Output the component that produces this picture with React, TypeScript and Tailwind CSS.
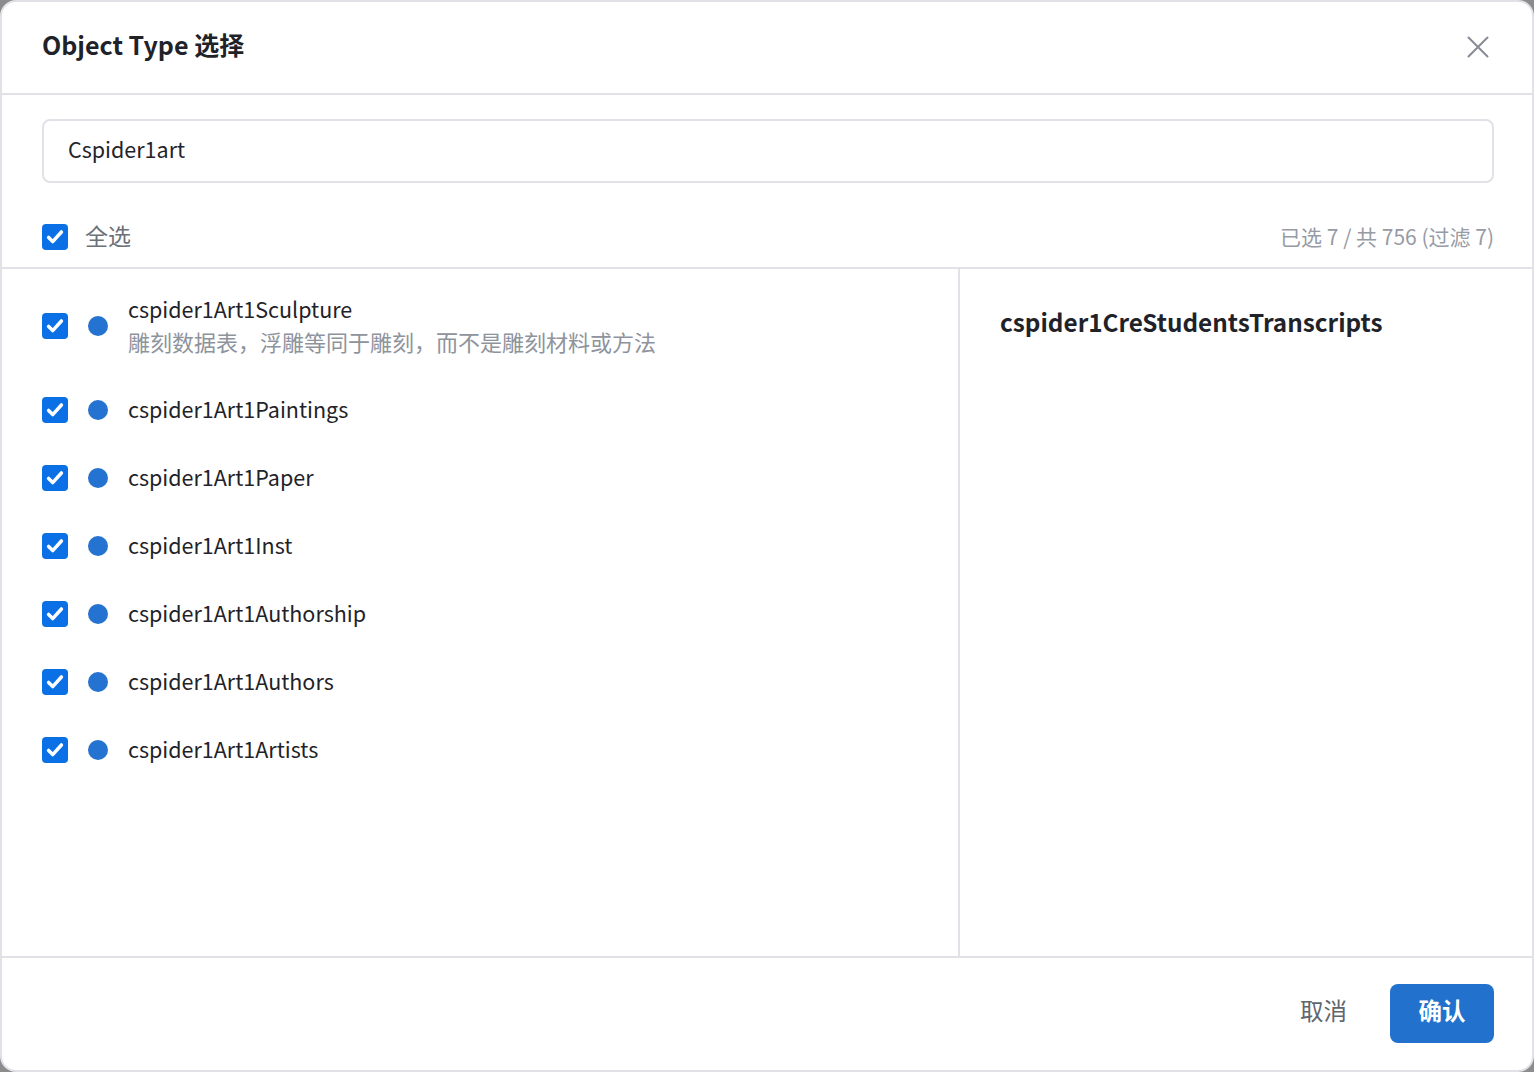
interface ObjectTypeItem {
  name: string
  description?: string
}

const items: ObjectTypeItem[] = [
  { name: 'cspider1Art1Sculpture', description: '雕刻数据表，浮雕等同于雕刻，而不是雕刻材料或方法' },
  { name: 'cspider1Art1Paintings' },
  { name: 'cspider1Art1Paper' },
  { name: 'cspider1Art1Inst' },
  { name: 'cspider1Art1Authorship' },
  { name: 'cspider1Art1Authors' },
  { name: 'cspider1Art1Artists' },
]

function CheckBox() {
  return (
    <span className="w-[26px] h-[26px] rounded-[4px] bg-[#0b6fe6] flex items-center justify-center flex-shrink-0">
      <svg viewBox="0 0 24 24" className="w-[22px] h-[22px]" fill="none" stroke="white" strokeWidth="3.8" strokeLinecap="round" strokeLinejoin="round">
        <path d="M5 12.5l4.5 4.5L19 6.5" />
      </svg>
    </span>
  )
}

export default function App() {
  return (
    <div className="bg-[#8c8c8c] min-h-[1072px] font-['Noto_Sans_CJK_SC','Noto_Sans',sans-serif]">
      <div className="h-[1072px] w-full bg-white rounded-[16px] border-2 border-[#e1e2e7] flex flex-col overflow-hidden">
        {/* En-tête */}
        <div className="h-[93px] flex-shrink-0 flex items-center justify-between pl-[40px] pr-[43px] border-b-2 border-[#e1e2e7]">
          <h1 className="text-[25px] font-semibold text-[#1f2329] leading-8 mb-[8px]">Object Type 选择</h1>
          <button className="text-[#868b96] mb-[2px]" aria-label="关闭">
            <svg viewBox="0 0 22 22" className="w-[22px] h-[22px]" fill="none" stroke="currentColor" strokeWidth="2" strokeLinecap="round">
              <path d="M1.5 1.5l19 19M20.5 1.5l-19 19" />
            </svg>
          </button>
        </div>

        {/* Recherche */}
        <div className="flex-shrink-0 pl-[40px] pr-[38px] pt-6 border-b-2 border-[#e1e2e7]">
          <div className="h-16 rounded-[8px] border-2 border-[#e1e2e7] flex items-center px-[24px]">
            <span className="text-[21.5px] text-[#1f2329] leading-8 mb-[4px]">Cspider1art</span>
          </div>
          <div className="h-[84px] flex items-center justify-between pt-[24px]">
            <div className="flex items-center gap-[17px]">
              <CheckBox />
              <span className="text-[23px] text-[#6b7079] leading-8 mb-[4px]">全选</span>
            </div>
            <span className="text-[21px] text-[#969ba5] leading-8 mb-[2px]">已选 7 / 共 756 (过滤 7)</span>
          </div>
        </div>

        {/* Corps */}
        <div className="flex-1 flex min-h-0 border-b-2 border-[#e1e2e7]">
          <div className="w-[958px] flex-shrink-0 border-r-2 border-[#e1e2e7] pt-[7px] pl-[40px]">
            {items.map(item => (
              <div key={item.name} className="flex items-center py-[17px]">
                <CheckBox />
                <span className="w-[20px] h-[20px] rounded-full bg-[#2573d0] ml-[20px] mr-[20px] flex-shrink-0" />
                <div className="mb-[2px]">
                  <p className="text-[21.5px] text-[#1f2329] leading-8">{item.name}</p>
                  {item.description && (
                    <p className="text-[22px] text-[#8e939c] leading-8">{item.description}</p>
                  )}
                </div>
              </div>
            ))}
          </div>
          <div className="flex-1 pl-[40px] pt-[37px]">
            <p className="text-[24.3px] font-semibold text-[#1f2329] leading-8">cspider1CreStudentsTranscripts</p>
          </div>
        </div>

        {/* Pied */}
        <div className="h-[112px] flex-shrink-0 flex items-center justify-end gap-[43px] pr-[38px]">
          <button className="text-[23.5px] text-[#60656e] leading-8 mb-[8px]">取消</button>
          <button className="h-[59px] w-[104px] pb-[7px] rounded-[8px] bg-[#2272cd] text-white text-[23.5px] font-semibold leading-8 mb-[2px]">确认</button>
        </div>
      </div>
    </div>
  )
}
